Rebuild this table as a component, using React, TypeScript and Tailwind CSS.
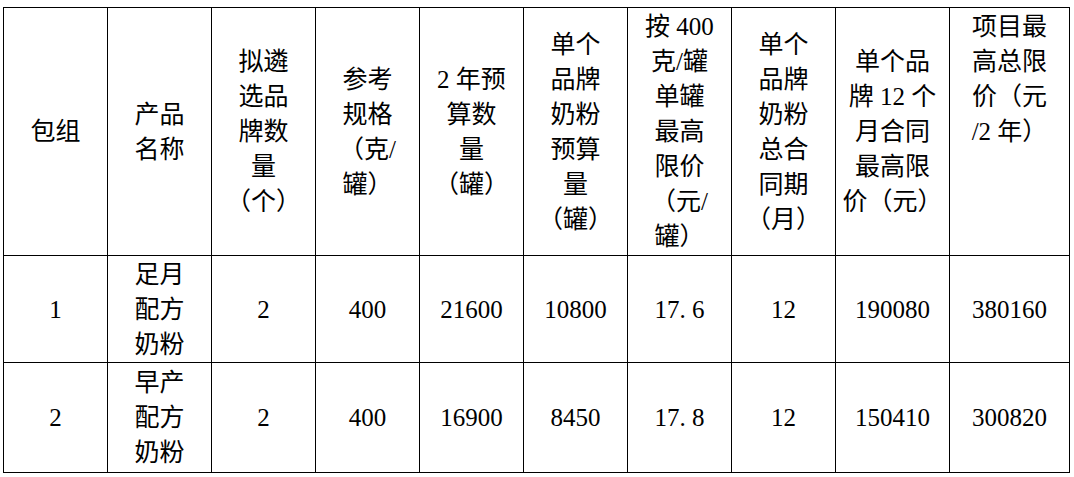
import React from "react";

type Cell = { lines: string[]; top?: boolean };

const header: Cell[] = [
  { lines: ["包组"] },
  { lines: ["产品", "名称"] },
  { lines: ["拟遴", "选品", "牌数", "量", "（个）"] },
  { lines: ["参考", "规格", "（克/", "罐）"] },
  { lines: ["2 年预", "算数", "量", "（罐）"] },
  { lines: ["单个", "品牌", "奶粉", "预算", "量", "（罐）"] },
  { lines: ["按 400", "克/罐", "单罐", "最高", "限价", "（元/", "罐）"] },
  { lines: ["单个", "品牌", "奶粉", "总合", "同期", "（月）"] },
  { lines: ["单个品", "牌 12 个", "月合同", "最高限", "价（元）"] },
  { lines: ["项目最", "高总限", "价（元", "/2 年）"], top: true },
];

const rows: string[][][] = [
  [["1"], ["足月", "配方", "奶粉"], ["2"], ["400"], ["21600"], ["10800"], ["17. 6"], ["12"], ["190080"], ["380160"]],
  [["2"], ["早产", "配方", "奶粉"], ["2"], ["400"], ["16900"], ["8450"], ["17. 8"], ["12"], ["150410"], ["300820"]],
];

function TableCell({ lines, top }: Cell) {
  return (
    <div
      className={
        "border-r border-b border-black flex flex-col items-center text-center " +
        (top ? "justify-start pt-px" : "justify-center")
      }
    >
      {lines.map((l, i) => (
        <div key={i} className="whitespace-pre leading-[35px]">
          {l}
        </div>
      ))}
    </div>
  );
}

export default function App() {
  return (
    <div className="w-[1074px] h-[477px] bg-white pl-[3px] pt-[7px] text-black">
      <div
        className="grid grid-cols-[repeat(8,104px)_114px_120px] grid-rows-[248px_107px_110px] border-l border-t border-black w-[1067px] text-[25px]"
        style={{ fontFamily: '"Liberation Serif", "Noto Sans CJK SC", serif' }}
      >
        {header.map((c, i) => (
          <TableCell key={"h" + i} lines={c.lines} top={c.top} />
        ))}
        {rows.map((r, ri) =>
          r.map((lines, ci) => <TableCell key={ri + "-" + ci} lines={lines} />)
        )}
      </div>
    </div>
  );
}
